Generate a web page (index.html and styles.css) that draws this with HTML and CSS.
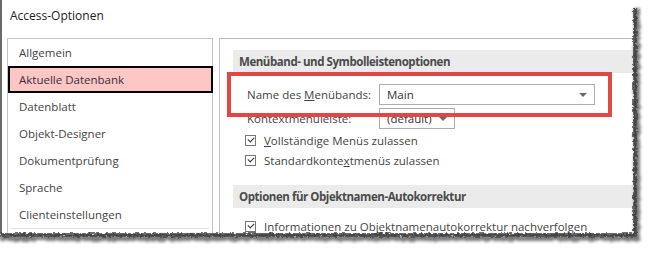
FILE: index.html
```html
<!DOCTYPE html>
<html lang="de">
<head>
    <meta charset="UTF-8">
    <title>Access-Optionen</title>
    <link rel="stylesheet" href="styles.css">
</head>
<body>
    <div class="window">
        <div class="title">Access-Optionen</div>
        <div class="content">
            <!-- Kategorien -->
            <ul class="nav">
                <li>Allgemein</li>
                <li class="active">Aktuelle Datenbank</li>
                <li>Datenblatt</li>
                <li>Objekt-Designer</li>
                <li>Dokumentprüfung</li>
                <li>Sprache</li>
                <li>Clienteinstellungen</li>
                <li class="sep"></li>
            </ul>

            <div class="pane">
                <div class="section-head">Menüband- und Symbolleistenoptionen</div>
                <div class="group">
                    <div class="field">
                        <span class="label">Name des <u>M</u>enübands:</span>
                        <div class="select wide">Main<span class="arrow"></span></div>
                    </div>
                    <div class="field">
                        <span class="label">Kontextmenüleiste:</span>
                        <div class="select small">(default)<span class="arrow"></span></div>
                    </div>
                    <div class="red-box"></div>
                </div>
                <div class="check"><span class="box"></span><span><u>V</u>ollständige Menüs zulassen</span></div>
                <div class="check"><span class="box"></span><span>Standardkonte<u>x</u>tmenüs zulassen</span></div>

                <div class="section-head second">Optionen für Objektnamen-Autokorrektur</div>
                <div class="check last"><span class="box"></span><span>Informationen zu Objektnamenautokorrektur nachverfolgen</span></div>
            </div>
        </div>
    </div>

    <!-- abgerissene Kante -->
    <svg class="edge" width="653" height="255">
        <defs>
            <filter id="torn" x="-10%" y="-10%" width="120%" height="120%">
                <feTurbulence type="fractalNoise" baseFrequency="0.35" numOctaves="2" seed="3" result="n"/>
                <feDisplacementMap in="SourceGraphic" in2="n" scale="5" xChannelSelector="R" yChannelSelector="G" result="d"/>
                <feGaussianBlur in="d" stdDeviation="0.6"/>
            </filter>
            <filter id="soft" x="-10%" y="-10%" width="120%" height="120%">
                <feTurbulence type="fractalNoise" baseFrequency="0.2" numOctaves="2" seed="7" result="n"/>
                <feDisplacementMap in="SourceGraphic" in2="n" scale="4" xChannelSelector="R" yChannelSelector="G" result="d"/>
                <feGaussianBlur in="d" stdDeviation="1.5"/>
            </filter>
        </defs>
        <path d="M637 8 L637 238 L0 238" fill="none" stroke="#7a7a7a" stroke-width="6" filter="url(#soft)"/>
        <path d="M635 8 L635 235 L0 235" fill="none" stroke="#444444" stroke-width="3.5" filter="url(#torn)"/>
    </svg>
</body>
</html>
```

FILE: styles.css
```css
body {
    margin: 0;
    background-color: white;
    font-family: "Open Sans", "Noto Sans", sans-serif;
    font-size: 11.5px;
    color: #444444;
    width: 653px;
    height: 255px;
    overflow: hidden;
}
.window {
    width: 634px;
    height: 234px;
    border-left: 2px solid #6a6a6a;
    box-sizing: border-box;
    overflow: hidden;
    background-color: white;
}
.title {
    height: 38px;
    padding-left: 8px;
    line-height: 32px;
    font-size: 12px;
    color: #222222;
}
.content {
    display: flex;
    gap: 6px;
    padding-left: 5px;
}
.nav {
    list-style: none;
    margin: 0;
    padding: 0;
    width: 206px;
    height: 220px;
    border: 1px solid #c4c4c4;
    box-sizing: border-box;
}
.nav li {
    height: 27px;
    line-height: 27px;
    padding-left: 11px;
}
.nav li.active {
    box-sizing: border-box;
    background-color: #ffc6c6;
    border: 2px solid black;
    margin: 0 -1px 0 0;
    padding-left: 9px;
    line-height: 23px;
    color: #333333;
}
.nav li.sep {
    height: 0;
    margin: 0 3px;
    border-top: 1px solid #e2e2e2;
}
.pane {
    flex: 1;
    height: 220px;
    border-top: 1px solid #b6b6b6;
    border-left: 1px solid #c4c4c4;
    padding: 11px 0 0 13px;
    box-sizing: border-box;
}
.section-head {
    height: 23px;
    line-height: 23px;
    padding-left: 6px;
    background-color: #ebebeb;
    font-weight: bold;
    letter-spacing: -0.45px;
    color: #4a4a4a;
}
.section-head.second {
    margin-top: 15px;
}
.group {
    position: relative;
    padding-top: 9px;
}
.field {
    display: flex;
    align-items: center;
    height: 24px;
    padding-left: 14px;
}
.label {
    width: 132px;
}
.select {
    position: relative;
    height: 21px;
    line-height: 20px;
    border: 1px solid #adadad;
    box-sizing: border-box;
    padding-left: 7px;
    color: #333333;
}
.select.wide {
    width: 216px;
}
.select.small {
    width: 76px;
}
.arrow {
    position: absolute;
    right: 7px;
    top: 8px;
    border-left: 4px solid transparent;
    border-right: 4px solid transparent;
    border-top: 4px solid #6a6a6a;
}
.red-box {
    position: absolute;
    left: -6px;
    top: -1px;
    width: 385px;
    height: 45px;
    border: 4px solid #e44545;
    box-sizing: border-box;
}
.check {
    display: flex;
    align-items: center;
    gap: 8px;
    height: 20px;
    padding-left: 12px;
}
.check.last {
    margin-top: 8px;
}
.box {
    width: 11px;
    height: 11px;
    border: 1px solid #777777;
    box-sizing: border-box;
    position: relative;
}
.box::after {
    content: "";
    position: absolute;
    left: 2px;
    top: 1px;
    width: 5px;
    height: 3px;
    border-left: 1px solid #333333;
    border-bottom: 1px solid #333333;
    transform: rotate(-45deg);
}
.edge {
    position: absolute;
    left: 0;
    top: 0;
    pointer-events: none;
}
```
